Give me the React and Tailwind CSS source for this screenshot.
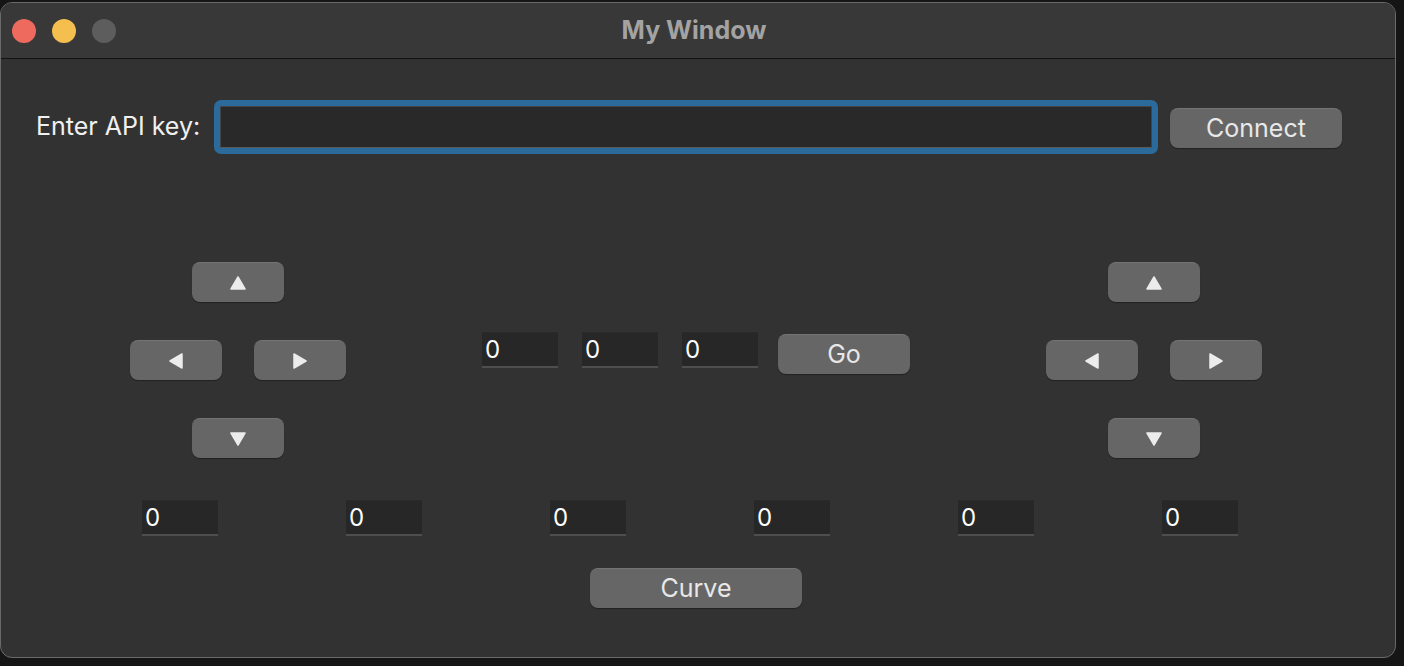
import React from 'react';

const font = { fontFamily: 'Inter, "Liberation Sans", sans-serif' };

const Tri = ({ dir }) => {
  const pts = {
    up: '8,2 15,14 1,14',
    down: '1,2 15,2 8,14',
    left: '2,8 14,1 14,15',
    right: '2,1 14,8 2,15',
  }[dir];
  return (
    <svg width="16" height="16" viewBox="0 0 16 16">
      <polygon points={pts} fill="#ececec" stroke="#ececec" strokeWidth="1.5" strokeLinejoin="round" />
    </svg>
  );
};

const ArrowBtn = ({ dir }) => (
  <button className="w-[92px] h-[40px] rounded-[8px] bg-[#666666] border-t border-[#747474] shadow-[0_1px_1px_rgba(0,0,0,0.35)] flex items-center justify-center">
    <Tri dir={dir} />
  </button>
);

const Btn = ({ label, w }) => (
  <button className={`${w} h-[40px] rounded-[8px] bg-[#666666] border-t border-[#747474] shadow-[0_1px_1px_rgba(0,0,0,0.35)] text-[25px] text-[#e8e8e8] flex items-center justify-center`}>
    {label}
  </button>
);

const NumBox = () => (
  <div className="w-[76px] h-[36px] bg-[#272727] border-b-2 border-[#4e4e4e] border-t border-t-[#2a2a2a] flex items-center pl-[3px] text-[24px] text-white">
    0
  </div>
);

const Cluster = () => (
  <div className="flex flex-col w-[216px]">
    <div className="pl-[62px]"><ArrowBtn dir="up" /></div>
    <div className="flex gap-[32px] mt-[38px]">
      <ArrowBtn dir="left" />
      <ArrowBtn dir="right" />
    </div>
    <div className="pl-[62px] mt-[38px]"><ArrowBtn dir="down" /></div>
  </div>
);

export default function App() {
  return (
    <div className="w-[1404px] h-[666px] bg-[#151515] overflow-hidden" style={font}>
      <div className="w-[1396px] h-[656px] mt-[2px] rounded-[12px] border border-[#6a6a6a] bg-[#323232] overflow-hidden flex flex-col">
        <div className="h-[56px] bg-[#383838] border-b border-[#121212] grid grid-cols-[1fr_auto_1fr] items-center shrink-0">
          <div className="flex gap-[16px] pl-[11px]">
            <span className="w-[24px] h-[24px] rounded-full bg-[#ee6a5f]" />
            <span className="w-[24px] h-[24px] rounded-full bg-[#f5bf4f]" />
            <span className="w-[24px] h-[24px] rounded-full bg-[#5d5d5d]" />
          </div>
          <div className="text-[25px] font-bold text-[#a3a3a3] pr-[8px]">My Window</div>
          <div />
        </div>

        <div className="flex items-center pt-[41px]">
          <span className="ml-[35px] text-[25px] text-[#f0f0f0] w-[178px]">Enter API key:</span>
          <div className="w-[944px] h-[54px] rounded-[7px] border-[6px] border-[#2a6b9b] bg-[#2a2a2a]">
            <div className="w-full h-full bg-[#292929] border border-[#444444] border-b-[#5a5a5a]" />
          </div>
          <div className="ml-[12px] mt-[2px]"><Btn label="Connect" w="w-[172px]" /></div>
        </div>

        <div className="flex mt-[108px] pl-[129px]">
          <Cluster />
          <div className="ml-[136px] mt-[70px] flex items-start gap-[24px] h-[42px]">
            <NumBox />
            <NumBox />
            <NumBox />
            <div className="-ml-[4px] mt-[2px]"><Btn label="Go" w="w-[132px]" /></div>
          </div>
          <div className="ml-[136px]"><Cluster /></div>
        </div>

        <div className="flex gap-[128px] pl-[141px] mt-[42px]">
          <NumBox /><NumBox /><NumBox /><NumBox /><NumBox /><NumBox />
        </div>

        <div className="flex justify-center mt-[32px]">
          <div className="ml-[-4px]"><Btn label="Curve" w="w-[212px]" /></div>
        </div>
      </div>
    </div>
  );
}
